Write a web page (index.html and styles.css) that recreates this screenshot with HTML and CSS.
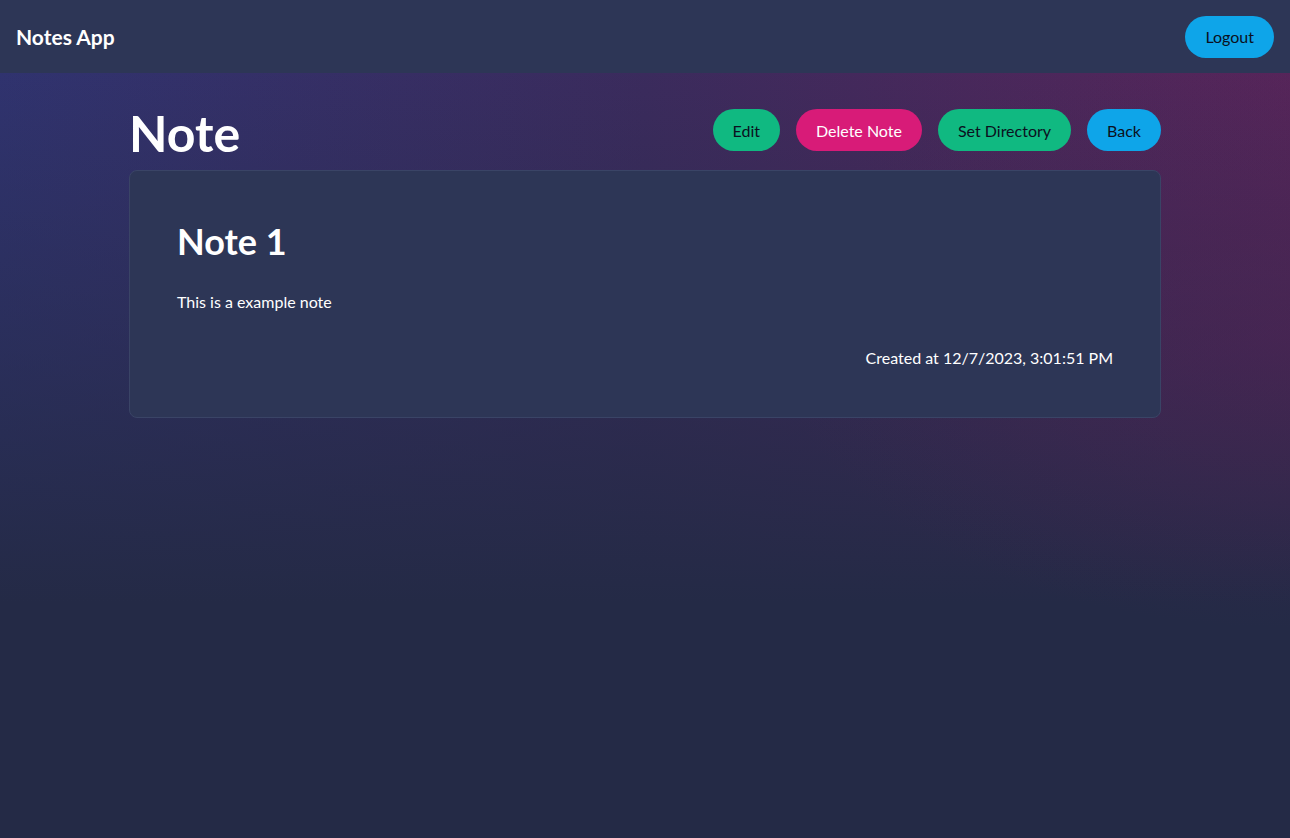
FILE: index.html
```html
<!DOCTYPE html>
<html lang="en">
<head>
<meta charset="utf-8">
<title>Notes App</title>
<link rel="stylesheet" href="styles.css">
</head>
<body>
<header class="navbar">
  <div class="brand">Notes App</div>
  <button class="btn btn-sky">Logout</button>
</header>
<main class="page">
  <div class="container">
    <div class="page-head">
      <h1 class="page-title">Note</h1>
      <div class="actions">
        <button class="btn btn-green">Edit</button>
        <button class="btn btn-pink">Delete Note</button>
        <button class="btn btn-green">Set Directory</button>
        <button class="btn btn-sky">Back</button>
      </div>
    </div>
    <article class="card">
      <h2 class="note-title">Note 1</h2>
      <p class="note-body">This is a example note</p>
      <p class="note-date">Created at 12/7/2023, 3:01:51 PM</p>
    </article>
  </div>
</main>
</body>
</html>
```
FILE: styles.css
```css
* { box-sizing: border-box; }
html, body { height: 100%; }
body {
  margin: 0;
  font-family: "Lato", "Open Sans", sans-serif;
  color: #ffffff;
  background:
    radial-gradient(ellipse 40% 35% at 100% 40%, rgba(80, 35, 85, 0.4), rgba(80, 35, 85, 0) 100%),
    linear-gradient(180deg, rgba(36, 42, 70, 0) 8%, rgba(36, 42, 70, 0.5) 42%, #242a46 72%),
    linear-gradient(90deg, #30336f 0%, #3b2b5d 50%, #57255a 100%);
  background-color: #242a46;
  display: flex;
  flex-direction: column;
}
.navbar {
  height: 73px;
  background: #2d3656;
  display: flex;
  align-items: center;
  justify-content: space-between;
  padding: 0 16px;
}
.brand {
  font-size: 21px;
  font-weight: 700;
}
.btn {
  font-family: inherit;
  font-size: 16px;
  height: 42px;
  padding: 0 20px;
  border: none;
  border-radius: 21px;
  color: #0b1020;
  cursor: pointer;
}
.btn-sky { background: #0ea5e9; }
.btn-green { background: #10b981; }
.btn-pink { background: #d81b78; color: #ffffff; }
.page {
  flex: 1;
  padding-top: 36px;
}
.container {
  width: 1032px;
  margin: 0 auto;
}
.page-head {
  display: flex;
  align-items: center;
  justify-content: space-between;
  height: 42px;
  margin-bottom: 19px;
}
.page-title {
  margin: 0;
  font-size: 50px;
  font-weight: 700;
  line-height: 1;
  position: relative;
  top: 3px;
}
.actions {
  display: flex;
  gap: 16px;
}
.card {
  background: #2d3656;
  border: 1px solid #3a4466;
  border-radius: 8px;
  padding: 48px 47px 47px;
}
.note-title {
  margin: 0 0 27px;
  font-size: 36px;
  font-weight: 700;
  line-height: 44px;
}
.note-body {
  margin: 0 0 32px;
  font-size: 16px;
  line-height: 24px;
}
.note-date {
  margin: 0;
  text-align: right;
  font-size: 16px;
  line-height: 24px;
}
```
